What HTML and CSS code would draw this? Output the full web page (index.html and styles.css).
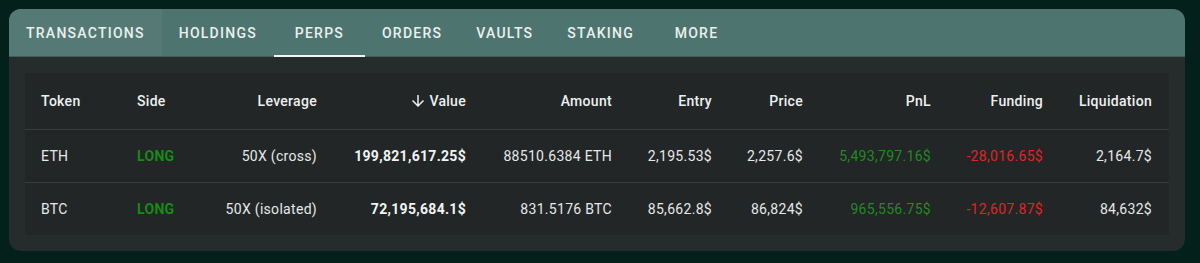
FILE: index.html
```html
<!DOCTYPE html>
<html>
<head>
<meta charset="utf-8">
<link rel="stylesheet" href="styles.css">
</head>
<body>
<div class="card">
  <div class="tabs">
    <div class="tab hover">TRANSACTIONS</div>
    <div class="tab">HOLDINGS</div>
    <div class="tab active">PERPS</div>
    <div class="tab">ORDERS</div>
    <div class="tab">VAULTS</div>
    <div class="tab">STAKING</div>
    <div class="tab">MORE</div>
  </div>
  <div class="body">
    <div class="table">
      <div class="row head">
        <div class="cell left">Token</div>
        <div class="cell left">Side</div>
        <div class="cell">Leverage</div>
        <div class="cell sort"><svg class="arrow" viewBox="0 0 24 24" width="18" height="18"><path d="M20 12l-1.41-1.41L13 16.170V4h-2v12.17l-5.58-5.59L4 12l8 8 8-8z" fill="currentColor"/></svg><span>Value</span></div>
        <div class="cell">Amount</div>
        <div class="cell">Entry</div>
        <div class="cell">Price</div>
        <div class="cell">PnL</div>
        <div class="cell">Funding</div>
        <div class="cell">Liquidation</div>
      </div>
      <div class="row">
        <div class="cell left">ETH</div>
        <div class="cell left long">LONG</div>
        <div class="cell">50X (cross)</div>
        <div class="cell strong">199,821,617.25$</div>
        <div class="cell">88510.6384 ETH</div>
        <div class="cell">2,195.53$</div>
        <div class="cell">2,257.6$</div>
        <div class="cell pos">5,493,797.16$</div>
        <div class="cell neg">-28,016.65$</div>
        <div class="cell">2,164.7$</div>
      </div>
      <div class="row last">
        <div class="cell left">BTC</div>
        <div class="cell left long">LONG</div>
        <div class="cell">50X (isolated)</div>
        <div class="cell strong">72,195,684.1$</div>
        <div class="cell">831.5176 BTC</div>
        <div class="cell">85,662.8$</div>
        <div class="cell">86,824$</div>
        <div class="cell pos">965,556.75$</div>
        <div class="cell neg">-12,607.87$</div>
        <div class="cell">84,632$</div>
      </div>
    </div>
  </div>
</div>
</body>
</html>
```
FILE: styles.css
```css
html, body {
  margin: 0;
  padding: 0;
  background: #04201b;
  font-family: Roboto, "Liberation Sans", sans-serif;
}
body {
  padding: 9px 15px 0 9px;
}
.card {
  width: 1176px;
  border-radius: 12px;
  overflow: hidden;
  background: #262b2b;
}
.tabs {
  display: flex;
  height: 47px;
  background: #4e746f;
  border-bottom: 1px solid #3f5f5a;
}
.tab {
  min-width: 91px;
  box-sizing: border-box;
  padding: 1px 17px 0 17px;
  display: flex;
  align-items: center;
  justify-content: center;
  color: #e9f0ee;
  font-size: 14px;
  font-weight: 500;
  letter-spacing: 1.25px;
  position: relative;
}
.tab.hover {
  background: #557a75;
}
.tab.active::after {
  content: "";
  position: absolute;
  left: 0;
  right: 0;
  bottom: -1px;
  height: 2px;
  background: #f2f5f4;
}
.body {
  padding: 16px;
}
.table {
  background: #222626;
}
.row {
  display: grid;
  grid-template-columns: 96px 80px 132px 149px 146px 100px 91px 128px 112px 109px;
  height: 52px;
  border-bottom: 1px solid #383c3c;
  color: #e6e8e8;
  font-size: 14px;
  letter-spacing: 0.3px;
}
.row.head {
  height: 56px;
  font-weight: 500;
  color: #eef0f0;
}
.row.last {
  border-bottom: none;
}
.cell {
  display: flex;
  align-items: center;
  justify-content: flex-end;
  padding: 0 16px;
  white-space: nowrap;
}
.cell.left {
  justify-content: flex-start;
}
.sort .arrow {
  margin-right: 2px;
}
.long {
  color: #178a17;
  font-weight: 700;
}
.strong {
  font-weight: 700;
  color: #f2f4f4;
}
.pos {
  color: #218a21;
}
.neg {
  color: #e02424;
}
```
